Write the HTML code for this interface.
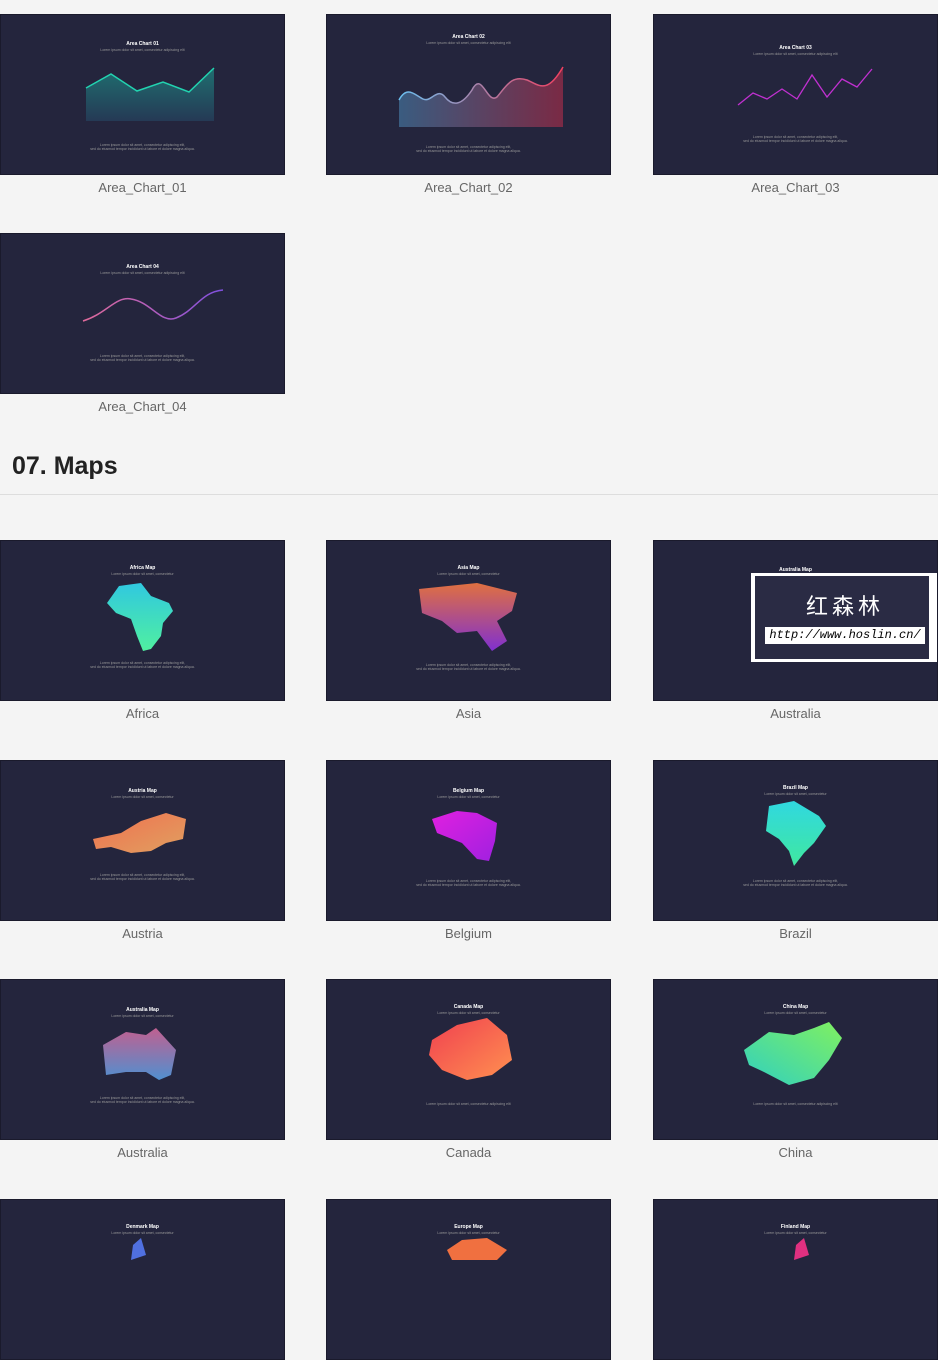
<!DOCTYPE html><html><head><meta charset="utf-8"><style>
body{margin:0;width:938px;height:1254px;background:#f4f4f4;position:relative;overflow:hidden;font-family:"Liberation Sans",sans-serif}
.c{position:absolute;width:285px;height:161px;background:#24253d;border:1px solid #1a1a2c;box-sizing:border-box;overflow:hidden}
.l{position:absolute;width:285px;text-align:center;font-size:13px;color:#666}
.t{position:absolute;left:0;right:0;text-align:center;color:#fff;font-size:5px;font-weight:bold}
.s{position:absolute;left:0;right:0;text-align:center;color:#999;font-size:3.5px}
h2{position:absolute;left:12px;top:452px;margin:0;font-size:25px;color:#222;font-weight:bold}
.hr{position:absolute;left:0;top:494px;width:938px;height:1px;background:#ddd}
</style></head><body>
<!-- row1 -->
<div class="c" style="left:0;top:14px"><div class="t" style="top:26px">Area Chart 01</div><div class="s" style="top:33px">Lorem ipsum dolor sit amet, consectetur adipiscing elit</div>
<svg width="285" height="161" style="position:absolute;left:0;top:0"><defs><linearGradient id="g1" x1="0" y1="0" x2="0" y2="1"><stop offset="0" stop-color="#1f6f70"/><stop offset="1" stop-color="#253a55"/></linearGradient></defs><path d="M85 73 L110 59 L136 76 L162 67 L188 77 L213 53 L213 106 L85 106Z" fill="url(#g1)"/><path d="M85 73 L110 59 L136 76 L162 67 L188 77 L213 53" stroke="#22d3b0" stroke-width="1.5" fill="none"/></svg>
<div class="s" style="top:128px">Lorem ipsum dolor sit amet, consectetur adipiscing elit,<br>sed do eiusmod tempor incididunt ut labore et dolore magna aliqua.</div></div>
<div class="l" style="left:0;top:180px">Area_Chart_01</div>

<div class="c" style="left:326px;top:14px"><div class="t" style="top:19px">Area Chart 02</div><div class="s" style="top:26px">Lorem ipsum dolor sit amet, consectetur adipiscing elit</div>
<svg width="285" height="161" style="position:absolute;left:0;top:0"><defs><linearGradient id="g2" x1="0" x2="1"><stop offset="0" stop-color="#3a5c80"/><stop offset="1" stop-color="#7a2a45"/></linearGradient><linearGradient id="g2s" x1="0" x2="1"><stop offset="0" stop-color="#6ac0f0"/><stop offset="1" stop-color="#f04060"/></linearGradient></defs><path d="M72 85 C80 70,88 80,96 84 C104 88,110 72,118 82 C126 92,135 90,145 75 C155 55,160 90,170 82 C180 70,185 60,200 65 C212 70,220 80,236 52 L236 112 L72 112Z" fill="url(#g2)"/><path d="M72 85 C80 70,88 80,96 84 C104 88,110 72,118 82 C126 92,135 90,145 75 C155 55,160 90,170 82 C180 70,185 60,200 65 C212 70,220 80,236 52" stroke="url(#g2s)" stroke-width="1.5" fill="none"/></svg>
<div class="s" style="top:130px">Lorem ipsum dolor sit amet, consectetur adipiscing elit,<br>sed do eiusmod tempor incididunt ut labore et dolore magna aliqua.</div></div>
<div class="l" style="left:326px;top:180px">Area_Chart_02</div>

<div class="c" style="left:653px;top:14px"><div class="t" style="top:30px">Area Chart 03</div><div class="s" style="top:37px">Lorem ipsum dolor sit amet, consectetur adipiscing elit</div>
<svg width="285" height="161" style="position:absolute;left:0;top:0"><path d="M84 90 L99 78 L113 84 L128 74 L143 84 L158 60 L173 82 L188 64 L203 72 L218 54" stroke="#c030d0" stroke-width="1.3" fill="none"/></svg>
<div class="s" style="top:120px">Lorem ipsum dolor sit amet, consectetur adipiscing elit,<br>sed do eiusmod tempor incididunt ut labore et dolore magna aliqua.</div></div>
<div class="l" style="left:653px;top:180px">Area_Chart_03</div>

<div class="c" style="left:0;top:233px"><div class="t" style="top:30px">Area Chart 04</div><div class="s" style="top:37px">Lorem ipsum dolor sit amet, consectetur adipiscing elit</div>
<svg width="285" height="161" style="position:absolute;left:0;top:0"><defs><linearGradient id="g4" x1="0" x2="1"><stop offset="0" stop-color="#e06a9a"/><stop offset="1" stop-color="#8050e0"/></linearGradient></defs><path d="M82 87 C105 80,115 62,130 65 C150 68,160 90,175 84 C195 76,200 58,222 56" stroke="url(#g4)" stroke-width="1.5" fill="none"/></svg>
<div class="s" style="top:120px">Lorem ipsum dolor sit amet, consectetur adipiscing elit,<br>sed do eiusmod tempor incididunt ut labore et dolore magna aliqua.</div></div>
<div class="l" style="left:0;top:399px">Area_Chart_04</div>

<h2>07. Maps</h2><div class="hr"></div>

<svg width="0" height="0" style="position:absolute"><defs>
<linearGradient id="m1" x1="0" y1="0" x2="0" y2="1"><stop offset="0" stop-color="#30c8e0"/><stop offset="1" stop-color="#50f0a0"/></linearGradient>
<linearGradient id="m2" x1="0" y1="0" x2="0" y2="1"><stop offset="0" stop-color="#e07040"/><stop offset="1" stop-color="#8030d0"/></linearGradient>
<linearGradient id="m3" x1="0" y1="0" x2="1" y2="1"><stop offset="0" stop-color="#f07050"/><stop offset="1" stop-color="#e0a060"/></linearGradient>
<linearGradient id="m4" x1="0" y1="0" x2="1" y2="1"><stop offset="0" stop-color="#e020e0"/><stop offset="1" stop-color="#a020e0"/></linearGradient>
<linearGradient id="m5" x1="0" y1="0" x2="0" y2="1"><stop offset="0" stop-color="#30d8e0"/><stop offset="1" stop-color="#40e8a0"/></linearGradient>
<linearGradient id="m6" x1="0" y1="0" x2="0" y2="1"><stop offset="0" stop-color="#c06090"/><stop offset="1" stop-color="#5090d0"/></linearGradient>
<linearGradient id="m7" x1="0" y1="0" x2="1" y2="1"><stop offset="0" stop-color="#f04050"/><stop offset="1" stop-color="#ff9050"/></linearGradient>
<linearGradient id="m8" x1="0" y1="1" x2="1" y2="0"><stop offset="0" stop-color="#30d0c0"/><stop offset="1" stop-color="#80f060"/></linearGradient>
</defs></svg>

<!-- maps row1 -->
<div class="c" style="left:0;top:540px"><div class="t" style="top:24px">Africa Map</div><div class="s" style="top:31px">Lorem ipsum dolor sit amet, consectetur</div>
<svg width="285" height="161" style="position:absolute;left:0;top:0"><path d="M118 45 L140 42 L150 55 L168 62 L172 70 L162 82 L160 95 L150 108 L142 110 L136 95 L130 78 L115 72 L106 62 Z" fill="url(#m1)"/></svg>
<div class="s" style="top:120px">Lorem ipsum dolor sit amet, consectetur adipiscing elit,<br>sed do eiusmod tempor incididunt ut labore et dolore magna aliqua.</div></div>
<div class="l" style="left:0;top:706px">Africa</div>

<div class="c" style="left:326px;top:540px"><div class="t" style="top:24px">Asia Map</div><div class="s" style="top:31px">Lorem ipsum dolor sit amet, consectetur</div>
<svg width="285" height="161" style="position:absolute;left:0;top:0"><path d="M92 48 L150 42 L190 52 L185 70 L170 80 L180 100 L165 110 L150 90 L130 92 L115 80 L95 72 Z" fill="url(#m2)"/></svg>
<div class="s" style="top:122px">Lorem ipsum dolor sit amet, consectetur adipiscing elit,<br>sed do eiusmod tempor incididunt ut labore et dolore magna aliqua.</div></div>
<div class="l" style="left:326px;top:706px">Asia</div>

<div class="c" style="left:653px;top:540px"><div class="t" style="top:26px">Australia Map</div>
<svg width="285" height="161" style="position:absolute;left:0;top:0"><path d="M105 70 L140 52 L168 62 L170 95 L150 105 L110 95 Z" fill="url(#m6)"/></svg>
<div style="position:absolute;left:97px;top:32px;width:186px;height:89px;background:#fff"></div>
<div style="position:absolute;left:101px;top:35px;width:174px;height:83px;background:#2a2b44"></div>
<div style="position:absolute;left:101px;top:48px;width:180px;text-align:center;color:#fff;font-family:'Noto Sans CJK SC',sans-serif;font-size:22px;letter-spacing:4px">红森林</div>
<div style="position:absolute;left:111px;top:86px;width:160px;height:17px;background:#fff;color:#000;font-family:'Liberation Mono',monospace;font-style:italic;font-size:12px;line-height:17px;text-align:center">http://www.hoslin.cn/</div>
</div>
<div class="l" style="left:653px;top:706px">Australia</div>

<!-- row2 -->
<div class="c" style="left:0;top:760px"><div class="t" style="top:27px">Austria Map</div><div class="s" style="top:34px">Lorem ipsum dolor sit amet, consectetur</div>
<svg width="285" height="161" style="position:absolute;left:0;top:0"><path d="M92 78 L120 72 L140 60 L165 52 L185 58 L182 78 L165 82 L150 90 L130 92 L110 86 L95 88 Z" fill="url(#m3)"/></svg>
<div class="s" style="top:112px">Lorem ipsum dolor sit amet, consectetur adipiscing elit,<br>sed do eiusmod tempor incididunt ut labore et dolore magna aliqua.</div></div>
<div class="l" style="left:0;top:926px">Austria</div>

<div class="c" style="left:326px;top:760px"><div class="t" style="top:27px">Belgium Map</div><div class="s" style="top:34px">Lorem ipsum dolor sit amet, consectetur</div>
<svg width="285" height="161" style="position:absolute;left:0;top:0"><path d="M105 58 L130 50 L150 52 L170 62 L168 80 L162 100 L150 98 L135 82 L110 72 Z" fill="url(#m4)"/></svg>
<div class="s" style="top:118px">Lorem ipsum dolor sit amet, consectetur adipiscing elit,<br>sed do eiusmod tempor incididunt ut labore et dolore magna aliqua.</div></div>
<div class="l" style="left:326px;top:926px">Belgium</div>

<div class="c" style="left:653px;top:760px"><div class="t" style="top:24px">Brazil Map</div><div class="s" style="top:31px">Lorem ipsum dolor sit amet, consectetur</div>
<svg width="285" height="161" style="position:absolute;left:0;top:0"><path d="M115 45 L140 40 L165 55 L172 65 L160 82 L150 92 L140 105 L135 90 L125 78 L112 70 Z" fill="url(#m5)"/></svg>
<div class="s" style="top:118px">Lorem ipsum dolor sit amet, consectetur adipiscing elit,<br>sed do eiusmod tempor incididunt ut labore et dolore magna aliqua.</div></div>
<div class="l" style="left:653px;top:926px">Brazil</div>

<!-- row3 -->
<div class="c" style="left:0;top:979px"><div class="t" style="top:27px">Australia Map</div><div class="s" style="top:34px">Lorem ipsum dolor sit amet, consectetur</div>
<svg width="285" height="161" style="position:absolute;left:0;top:0"><path d="M102 65 L125 52 L145 55 L155 48 L175 70 L170 95 L158 100 L145 92 L125 92 L105 95 Z" fill="url(#m6)"/></svg>
<div class="s" style="top:116px">Lorem ipsum dolor sit amet, consectetur adipiscing elit,<br>sed do eiusmod tempor incididunt ut labore et dolore magna aliqua.</div></div>
<div class="l" style="left:0;top:1145px">Australia</div>

<div class="c" style="left:326px;top:979px"><div class="t" style="top:24px">Canada Map</div><div class="s" style="top:31px">Lorem ipsum dolor sit amet, consectetur</div>
<svg width="285" height="161" style="position:absolute;left:0;top:0"><path d="M105 60 L130 45 L160 38 L180 55 L185 80 L165 95 L140 100 L115 90 L102 75 Z" fill="url(#m7)"/></svg>
<div class="s" style="top:122px">Lorem ipsum dolor sit amet, consectetur adipiscing elit</div></div>
<div class="l" style="left:326px;top:1145px">Canada</div>

<div class="c" style="left:653px;top:979px"><div class="t" style="top:24px">China Map</div><div class="s" style="top:31px">Lorem ipsum dolor sit amet, consectetur</div>
<svg width="285" height="161" style="position:absolute;left:0;top:0"><path d="M90 70 L115 52 L140 55 L160 48 L175 42 L188 58 L175 80 L160 98 L135 105 L110 92 L95 85 Z" fill="url(#m8)"/></svg>
<div class="s" style="top:122px">Lorem ipsum dolor sit amet, consectetur adipiscing elit</div></div>
<div class="l" style="left:653px;top:1145px">China</div>

<!-- row4 -->
<div class="c" style="left:0;top:1199px"><div class="t" style="top:24px">Denmark Map</div><div class="s" style="top:31px">Lorem ipsum dolor sit amet, consectetur</div>
<svg width="285" height="161" style="position:absolute;left:0;top:0"><path d="M132 45 L140 38 L145 55 L130 60Z" fill="#5070e0"/></svg></div>
<div class="c" style="left:326px;top:1199px"><div class="t" style="top:24px">Europe Map</div><div class="s" style="top:31px">Lorem ipsum dolor sit amet, consectetur</div>
<svg width="285" height="161" style="position:absolute;left:0;top:0"><path d="M120 50 L135 40 L160 38 L180 50 L170 60 L125 60Z" fill="#f07040"/></svg></div>
<div class="c" style="left:653px;top:1199px"><div class="t" style="top:24px">Finland Map</div><div class="s" style="top:31px">Lorem ipsum dolor sit amet, consectetur</div>
<svg width="285" height="161" style="position:absolute;left:0;top:0"><path d="M142 45 L150 38 L155 55 L140 60Z" fill="#e03080"/></svg></div>
</body></html>
